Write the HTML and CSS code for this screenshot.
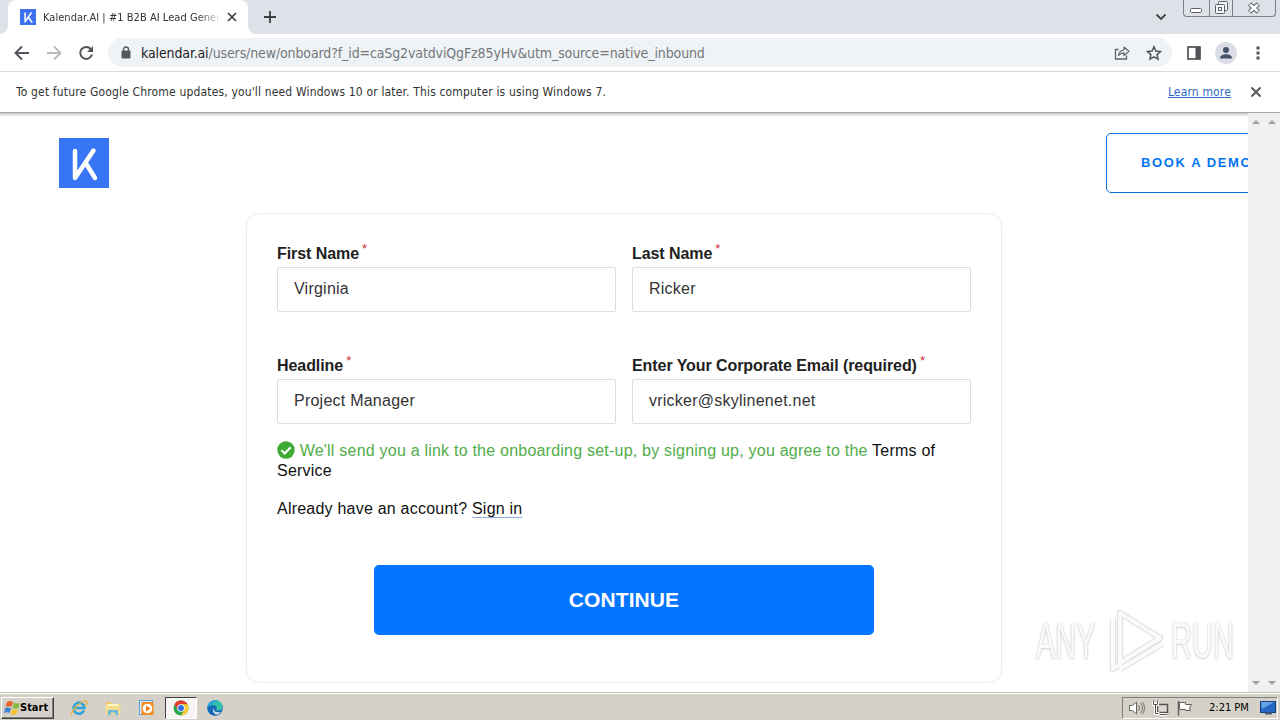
FILE: index.html
```html
<!DOCTYPE html>
<html lang="en">
<head>
    <meta charset="UTF-8">
    <meta name="viewport" content="width=device-width, initial-scale=1.0">
    <title>Kalendar.AI | #1 B2B AI Lead Generation</title>
    <link rel="stylesheet" href="styles.css">
</head>
<body>

    <!-- Tab strip -->
    <div class="tabstrip">
        <div class="tab">
            <svg class="favicon" viewBox="0 0 50 50"><rect width="50" height="50" fill="#3d6fee"/><path d="M16 13v27L35 12M26 26l11 15" fill="none" stroke="#fff" stroke-width="5" stroke-linecap="round" stroke-linejoin="round"/></svg>
            <span class="tab-title">Kalendar.AI | #1 B2B AI Lead Gener</span>
            <svg class="tab-close" width="10" height="10" viewBox="0 0 10 10"><path d="M1 1l8 8M9 1l-8 8" stroke="#3c4043" stroke-width="1.7"/></svg>
        </div>
        <svg class="new-tab" width="12" height="12" viewBox="0 0 12 12"><path d="M6 0v12M0 6h12" stroke="#3c4043" stroke-width="1.8"/></svg>
        <svg class="tab-search" width="12" height="8" viewBox="0 0 12 8"><path d="M1.5 1.5L6 6l4.500-4.500" fill="none" stroke="#3c4043" stroke-width="1.8"/></svg>
        <div class="window-buttons">
            <span class="min"><svg width="14" height="14" viewBox="0 0 14 14"><rect x="1.500" y="7.500" width="11" height="4" rx="1" fill="#fff" stroke="#5d6065"/></svg></span>
            <span class="max"><svg width="14" height="14" viewBox="0 0 14 14"><g fill="#f5f6f8" stroke="#5d6065"><rect x="4.500" y=".5" width="9" height="9" rx="1"/><rect x="1.500" y="3.500" width="9" height="9" rx="1"/><rect x="4.500" y="6.500" width="3" height="3"/></g></svg></span>
            <span class="close"><svg width="14" height="14" viewBox="0 0 14 14"><path d="M2.500 3l9 8M11.500 3l-9 8" stroke="#5d6065" stroke-width="4.500"/><path d="M3 3.500l8 7M11 3.500l-8 7" stroke="#fff" stroke-width="2.500"/></svg></span>
        </div>
    </div>

    <!-- Toolbar -->
    <div class="toolbar">
        <svg class="nav back" width="16" height="16" viewBox="0 0 16 16"><path d="M15 8H2M8 1.500L1.500 8 8 14.500" fill="none" stroke="#505357" stroke-width="1.900"/></svg>
        <svg class="nav forward" width="16" height="16" viewBox="0 0 16 16"><path d="M1 8h13M8 1.500L14.500 8 8 14.500" fill="none" stroke="#b8babd" stroke-width="1.900"/></svg>
        <svg class="nav reload" width="16" height="16" viewBox="0 0 16 16"><path d="M12.800 4A6 6 0 1 0 14 9.500" fill="none" stroke="#505357" stroke-width="2"/><path d="M15 1v6H9z" fill="#505357"/></svg>
        <div class="omnibox">
            <svg class="lock" width="10" height="13" viewBox="0 0 10 13"><rect x=".5" y="4.500" width="9" height="8" rx="1" fill="#55585c"/><path d="M2.500 5V3.500a2.500 2.500 0 0 1 5 0V5" fill="none" stroke="#55585c" stroke-width="1.400"/></svg>
            <span class="url"><b>kalendar.ai</b>/users/new/onboard?f_id=caSg2vatdviQgFz85yHv&amp;utm_source=native_inbound</span>
            <svg class="share" width="16" height="16" viewBox="0 0 16 16"><path d="M4.500 4.500H1.500v9.500h11v-3.500" fill="none" stroke="#5f6368" stroke-width="1.300"/><path d="M4.500 10.500C5 7 7 5.300 10 5V2l5 4.300-5 4.200V7.800C7.500 7.800 6 8.500 4.500 10.500z" fill="none" stroke="#5f6368" stroke-width="1.200" stroke-linejoin="round"/></svg>
            <svg class="star" width="16" height="16" viewBox="0 0 16 16"><path d="M8 1.800l1.900 4.200 4.600.5-3.400 3.100.9 4.500-4-2.300-4 2.300.9-4.500L1.500 6.500 6.100 6z" fill="none" stroke="#505357" stroke-width="1.500"/></svg>
        </div>
        <svg class="side-panel" width="14" height="14" viewBox="0 0 14 14"><rect x="1" y="1" width="12" height="12" fill="none" stroke="#505357" stroke-width="1.700"/><path d="M8.500 1H13v12H8.500z" fill="#505357"/></svg>
        <svg class="avatar" width="22" height="22" viewBox="0 0 22 22"><circle cx="11" cy="11" r="11" fill="#dadde3"/><circle cx="11" cy="8" r="3" fill="#45506b"/><path d="M5 16.500c0-3 3-4.300 6-4.300s6 1.300 6 4.300z" fill="#45506b"/></svg>
        <svg class="menu" width="4" height="14" viewBox="0 0 4 14"><path d="M.5.500h3v3h-3zM.5 5.500h3v3h-3zM.5 10.500h3v3h-3z" fill="#505357"/></svg>
    </div>

    <!-- Update notice -->
    <div class="infobar">
        <span class="notice">To get future Google Chrome updates, you'll need Windows 10 or later. This computer is using Windows 7.</span>
        <a class="learn-more" href="#">Learn more</a>
        <svg width="12" height="12" viewBox="0 0 12 12"><path d="M1.500 1.500l9 9M10.500 1.500l-9 9" stroke="#505357" stroke-width="1.800"/></svg>
    </div>

    <div class="viewport">
        <main class="page">
            <header class="site-header">
                <svg class="logo" width="50" height="50" viewBox="0 0 50 50"><rect width="50" height="50" fill="#3775f5"/><path d="M16 13v27L34.500 12.500M27 25.500l9 14.500" fill="none" stroke="#fff" stroke-width="4.500" stroke-linecap="round" stroke-linejoin="round"/></svg>
                <a class="demo-button" href="#">BOOK A DEMO</a>
            </header>

            <form class="card">
                <div class="fields">
                    <div class="field">
                        <label for="first">First Name<i>*</i></label>
                        <input id="first" type="text" value="Virginia">
                    </div>
                    <div class="field">
                        <label for="last">Last Name<i>*</i></label>
                        <input id="last" type="text" value="Ricker">
                    </div>
                    <div class="field">
                        <label for="headline">Headline<i>*</i></label>
                        <input id="headline" type="text" value="Project Manager">
                    </div>
                    <div class="field">
                        <label for="email">Enter Your Corporate Email (required)<i>*</i></label>
                        <input id="email" type="text" value="vricker@skylinenet.net">
                    </div>
                </div>
                <p class="terms"><svg width="18" height="18" viewBox="0 0 18 18"><circle cx="9" cy="9" r="8.700" fill="#3eaa34"/><path d="M4.500 9.300l3.200 3.200 6-6.300" fill="none" stroke="#fff" stroke-width="2.200"/></svg> We'll send you a link to the onboarding set-up, by signing up, you agree to the <a href="#">Terms of Service</a></p>
                <p class="signin">Already have an account? <a href="#">Sign in</a></p>
                <button class="continue" type="button">CONTINUE</button>
            </form>

            <div class="watermark">
                <span>ANY</span>
                <svg width="60" height="64" viewBox="0 0 60 64"><g fill="none" stroke-linejoin="round"><path d="M14 4l40 25-40 25zM7 10v50l8-5M14 60l42-25" stroke="#e2e2e2" stroke-width="6.500"/><path d="M14 4l40 25-40 25zM7 10v50l8-5M14 60l42-25" stroke="#fafafa" stroke-width="4"/></g></svg>
                <span>RUN</span>
            </div>
        </main>
        <div class="scrollbars">
            <div class="scrollbar"><i class="up"></i><i class="down"></i></div>
            <div class="scrollbar"><i class="up"></i><i class="down"></i></div>
        </div>
    </div>

    <!-- Windows taskbar -->
    <div class="taskbar">
        <div class="start">
            <svg width="17" height="16" viewBox="0 0 17 16"><path d="M3 2q3-2 6 0L7.500 7Q5 5.500 1.500 7z" fill="#e8622c"/><path d="M10 2.500q3 2 6 0L14.500 8q-3 1.500-6 0z" fill="#86b944"/><path d="M1 8.300q3-1.500 6 0L5.500 13q-3-1.500-5.500 0z" fill="#3c83d0"/><path d="M8 9q3 1.500 6 0l-1.500 5q-3 1.500-6 0z" fill="#f6c02c"/></svg>
            <span>Start</span>
        </div>
        <div class="quick">
            <span class="task"><svg width="18" height="18" viewBox="0 0 18 18"><path d="M14 11.500A5.500 5.500 0 1 1 14.500 9H5" fill="none" stroke="#36a3dc" stroke-width="2.600"/><path d="M2 16C-1 13 12 1 16 2c2 1 0 4-1 5" fill="none" stroke="#e5b93a" stroke-width="1.300"/></svg></span>
            <span class="task"><svg width="18" height="18" viewBox="0 0 18 18"><path d="M2 3h5l1 2h8v10H2z" fill="#e8c766"/><path d="M3 5h12v4H3z" fill="#fff5bd"/><path d="M1.500 7h15v8h-15z" fill="#f3dc8c"/><path d="M4 16v-5h10v5h-2.500v-2.500h-5V16z" fill="#67b5d8"/></svg></span>
            <span class="task"><svg width="18" height="18" viewBox="0 0 18 18"><rect x="1.500" y="1.500" width="13" height="14" fill="#d7e9f7" stroke="#5aa4d8"/><rect x="3.500" y="3" width="12" height="13" rx="1" fill="#f28b1d"/><circle cx="9.500" cy="9.500" r="4.800" fill="#fff"/><path d="M8 6.500v6l4.500-3z" fill="#ea7a12"/></svg></span>
            <span class="task active"><svg width="18" height="18" viewBox="0 0 18 18"><circle cx="9" cy="9" r="7.500" fill="#2da94f"/><path d="M2.500 5.250A7.500 7.500 0 0 1 15.500 5.250H9L5.750 10.900z" fill="#e33b2e"/><path d="M15.500 5.250A7.500 7.500 0 0 1 9 16.500l3.250-5.600L9 5.250z" fill="#fcc934"/><circle cx="9" cy="9" r="3.800" fill="#fff"/><circle cx="9" cy="9" r="2.900" fill="#2b6fe0"/></svg></span>
            <span class="task"><svg width="18" height="18" viewBox="0 0 18 18"><circle cx="9" cy="9" r="7.800" fill="#1769b8"/><path d="M1.300 8.500C2 4 5.500 1.200 9.300 1.200c4.300 0 7.500 3.200 7.500 6.300 0 3-2.600 4-4.800 4-1.600 0-2-.7-1.500-1.500C11.500 8 9.500 6 7 6 4.500 6 2.200 7 1.300 8.500z" fill="#35c1a5"/><path d="M1.300 8.500C2 4 5.500 1.200 9.300 1.200c2 0 3 .6 4 1.300C8 2 6 5 6.500 6 4.500 6 2.200 7 1.300 8.500z" fill="#2aa8dd"/><path d="M8 9c-1 2.500 1.500 5 6 4.200l1.500-.8C14 14 12.500 15 11 15.500 7.500 15 6 11.500 8 9z" fill="#d8e4e8"/></svg></span>
        </div>
        <div class="tray">
            <svg width="18" height="16" viewBox="0 0 18 16"><path d="M1.500 5.500h3L8.500 2v12l-4-3.500h-3z" fill="#fff" stroke="#65615c"/><path d="M10.500 5q2 3 0 6M12.500 3q4 5 0 10M14.500 2q4 6 0 12" fill="none" stroke="#77736e"/></svg>
            <svg width="18" height="16" viewBox="0 0 18 16"><path d="M5.500 4.500h10v8h-10z" fill="#ddd9d2" stroke="#55524e" stroke-width="1.500"/><path d="M1.500 1.500v3h4v-3M3.500 5v8.500h4M8 14.500h7" fill="none" stroke="#fff" stroke-width="3"/><path d="M1.500.500v4h4v-4M3.500 5v8.500h3M8 14.500h7" fill="none" stroke="#55524e"/></svg>
            <svg width="18" height="16" viewBox="0 0 18 16"><path d="M3.500 2.500h6v2h6l-2 3.500 1 2.500h-5v-1h-6z" fill="#fff" stroke="#65615c"/><path d="M2.500 1v14.500" stroke="#65615c" stroke-width="1.500"/></svg>
            <span class="clock">2:21 PM</span>
            <svg class="desktop" width="16" height="14" viewBox="0 0 16 14"><rect x=".5" y=".5" width="15" height="11" fill="#2468c4" stroke="#163f86"/><path d="M1 1h13L2 8z" fill="#65a7e6"/><path d="M5 12.500h7" stroke="#4b5c75" stroke-width="2"/></svg>
        </div>
    </div>

</body>
</html>
```
FILE: styles.css
```css
* {
    margin: 0;
    padding: 0;
    box-sizing: border-box;
}

body {
    display: flex;
    flex-direction: column;
    width: 1280px;
    height: 720px;
    overflow: hidden;
    background-color: #fff;
    font-family: "DejaVu Sans Condensed", "Noto Sans", sans-serif;
    font-size: 11px;
    color: #333;
}

svg {
    display: block;
    flex-shrink: 0;
}

/* Tab strip */
.tabstrip {
    display: flex;
    align-items: center;
    height: 34px;
    background-color: #dee1e8;
}

.tab {
    position: relative;
    display: flex;
    align-items: center;
    width: 240px;
    height: 34px;
    margin-left: 8px;
    padding: 0 11px 0 12px;
    border-radius: 8px 8px 0 0;
    background-color: #fff;
}

/* Curved feet of the active tab */
.tab::before,
.tab::after {
    content: "";
    position: absolute;
    bottom: 0;
    width: 8px;
    height: 8px;
}

.tab::before {
    left: -8px;
    background: radial-gradient(circle at 0 0, transparent 7.5px, #fff 8px);
}

.tab::after {
    right: -8px;
    background: radial-gradient(circle at 100% 0, transparent 7.5px, #fff 8px);
}

.favicon {
    width: 16px;
    height: 16px;
}

.tab-title {
    width: 175px;
    margin-left: 7px;
    overflow: hidden;
    white-space: nowrap;
    letter-spacing: 0.04px;
    mask-image: linear-gradient(to right, #000 155px, transparent 180px);
}

.tab-close {
    margin-left: 9px;
}

.new-tab {
    margin-left: 16px;
}

.tab-search {
    margin-left: auto;
}

.window-buttons {
    display: flex;
    align-self: flex-start;
    width: 93px;
    height: 17px;
    margin: 0 4px 0 16px;
    border: 1px solid #7d8188;
    border-top: none;
    border-radius: 0 0 4px 4px;
}

.window-buttons span {
    display: flex;
    justify-content: center;
    align-items: center;
    width: 25px;
}

.window-buttons .max {
    border: solid #7d8188;
    border-width: 0 1px;
}

.window-buttons .close {
    width: 42px;
}

/* Toolbar */
.toolbar {
    display: flex;
    align-items: center;
    height: 38px;
    padding-left: 14px;
    border-bottom: 1px solid #d8dadd;
}

.nav {
    margin-right: 16px;
}

.reload {
    margin-right: 14px;
}

.omnibox {
    display: flex;
    align-items: center;
    width: 1064px;
    height: 29px;
    padding: 0 10px 0 13px;
    border-radius: 15px;
    background-color: #f0f3f5;
}

.url {
    margin-left: 10px;
    font-size: 14px;
    letter-spacing: -0.12px;
    color: #73777b;
}

.url b {
    font-weight: normal;
    color: #202124;
}

.share {
    margin-left: auto;
}

.star {
    margin-left: 16px;
}

.side-panel {
    margin-left: 15px;
}

.avatar {
    margin-left: 14px;
}

.menu {
    margin-left: 19px;
}

/* Update notice */
.infobar {
    display: flex;
    align-items: center;
    height: 40px;
    padding: 0 18px 0 16px;
    font-size: 12px;
    letter-spacing: 0.16px;
}

.learn-more {
    margin: 0 19px 0 auto;
    color: #2f69c4;
}

/* Page */
.viewport {
    display: flex;
    height: 580px;
    border-top: 1px solid #a6a6a6;
    background: linear-gradient(#c6c6c6, #fff 4px);
}

.page {
    position: relative;
    width: 1248px;
    overflow: hidden;
    font-family: "Liberation Sans", Arial, sans-serif;
    font-size: 16px;
    color: #212121;
}

.site-header {
    display: flex;
    justify-content: space-between;
    align-items: center;
    width: 1290px;
    height: 100px;
    padding-left: 59px;
}

.demo-button {
    width: 184px;
    height: 60px;
    padding-left: 34px;
    border: 1px solid #0b70dc;
    border-radius: 5px;
    font-size: 13px;
    font-weight: bold;
    line-height: 58px;
    letter-spacing: 1.6px;
    text-decoration: none;
    white-space: nowrap;
    color: #0575f3;
}

.card {
    width: 756px;
    height: 470px;
    margin: 0 auto;
    padding: 29px 30px;
    border: 1px solid #ededed;
    border-radius: 12px;
}

.fields {
    display: grid;
    grid-template-columns: 1fr 1fr;
    grid-auto-rows: 69px;
    gap: 43px 16px;
}

.field label {
    display: flex;
    height: 24px;
    font-weight: bold;
    line-height: 22px;
    letter-spacing: -0.07px;
}

.field label i {
    margin: -5px 0 0 3px;
    font-size: 13px;
    font-style: normal;
    font-weight: normal;
    color: #d02f48;
}

.field input {
    display: block;
    width: 100%;
    height: 45px;
    padding: 0 16px 2px;
    border: 1px solid #ddd;
    border-radius: 2px;
    background-color: #fff;
    font: inherit;
    letter-spacing: 0.24px;
    color: #333;
}

.terms,
.signin {
    line-height: 20px;
    letter-spacing: 0.22px;
    color: #111;
}

.terms {
    margin-top: 17px;
    color: #51ad49;
}

.terms svg {
    display: inline-block;
    margin-top: -1px;
    vertical-align: -3px;
}

.terms a,
.signin a {
    text-decoration: none;
    color: #111;
}

.signin {
    margin-top: 18px;
}

.signin a {
    border-bottom: 1px solid #8eafd8;
}

.continue {
    display: block;
    width: 500px;
    height: 70px;
    margin: 46px auto 0;
    border: none;
    border-radius: 5px;
    background-color: #0475ff;
    font: bold 21px "Liberation Sans", Arial, sans-serif;
    letter-spacing: 0.1px;
    color: #fff;
}

/* Watermark lies over the page corner */
.watermark {
    position: absolute;
    right: 12px;
    bottom: 19px;
    display: flex;
    align-items: center;
    gap: 5px;
}

.watermark span {
    width: 65px;
    font-size: 50px;
    line-height: 64px;
    color: #fafafa;
    text-shadow: 0 0 2px #c4c4c4, 0 1px 3px #d4d4d4;
    transform: scaleX(0.58);
    transform-origin: left;
}

.scrollbars {
    display: flex;
    width: 32px;
    background-color: #f0f0f0;
}

.scrollbar {
    display: flex;
    flex-direction: column;
    justify-content: space-between;
    align-items: center;
    width: 16px;
    padding: 7px 0;
}

.up,
.down {
    border: 4px solid transparent;
}

.up {
    border-top: none;
    border-bottom-color: #a0a0a0;
}

.down {
    border-bottom: none;
    border-top-color: #a0a0a0;
}

/* Windows taskbar */
.taskbar {
    display: flex;
    align-items: center;
    height: 28px;
    padding: 2px 2px 0 1px;
    border-top: 1px solid #c4c1bb;
    background-color: #d5d0c8;
    box-shadow: inset 0 1px #fff;
    color: #000;
}

.start {
    display: flex;
    align-items: center;
    width: 53px;
    height: 22px;
    padding-left: 2px;
    border: 1px solid;
    border-color: #fff #404040 #404040 #fff;
    box-shadow: inset -1px -1px #808080;
    font-weight: bold;
    letter-spacing: 0;
}

.start span {
    margin-left: -1px;
}

.quick {
    display: flex;
    margin-left: 8px;
}

.task {
    display: flex;
    justify-content: center;
    align-items: center;
    width: 34px;
    height: 22px;
}

.task.active {
    width: 32px;
    margin: 0 1px;
    border: 1px solid;
    border-color: #404040 #fff #fff #404040;
    background-color: #f6f5f3;
}

.tray {
    display: flex;
    align-items: center;
    gap: 6px;
    width: 156px;
    height: 22px;
    margin-left: auto;
    padding-left: 5px;
    border: 1px solid;
    border-color: #808080 #fff #fff #808080;
}

.clock {
    margin-left: 9px;
    white-space: nowrap;
}

.desktop {
    margin-left: 5px;
}
```
